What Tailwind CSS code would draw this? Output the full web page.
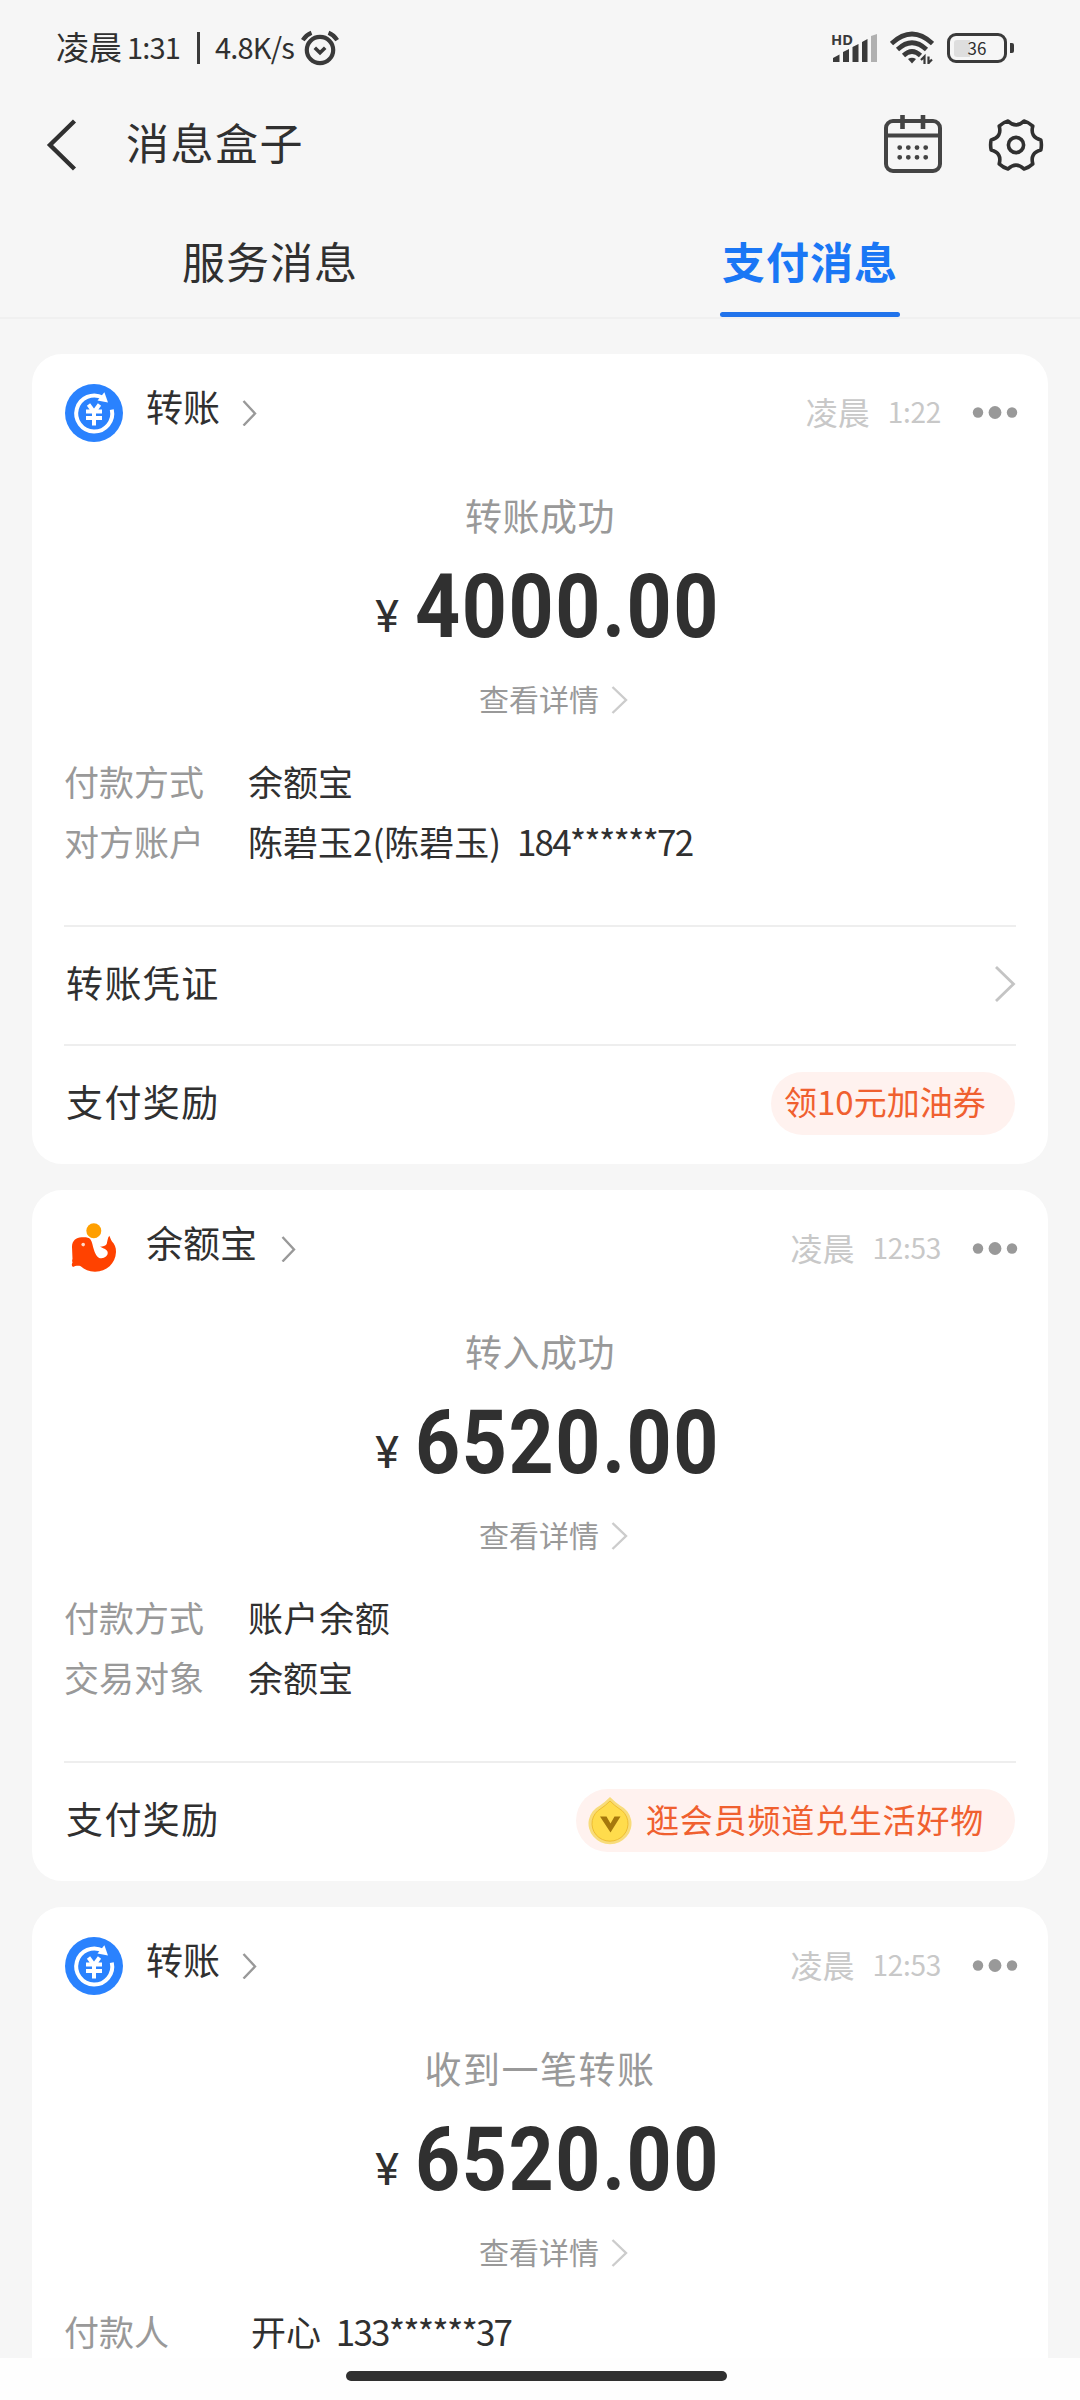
<!DOCTYPE html>
<html lang="zh-CN">
<head>
<meta charset="utf-8">
<title>消息盒子</title>
<script src="https://cdn.jsdelivr.net/npm/@tailwindcss/browser@4"></script>
</head>
<body class="bg-[#f6f6f6]">
<svg class="hidden">
  <symbol id="transfer" viewBox="0 0 58 58">
    <circle cx="29" cy="29" r="29" fill="#2a82fe"/>
    <path d="M38 13.8A18 18 0 1 0 46.8 25.6" fill="none" stroke="#fff" stroke-width="4"/>
    <path d="M39.4 8.2L43 18.6L32.5 16.5Z" fill="#fff"/>
    <path d="M23.5 20.5L29 28L34.5 20.5M21 27.5H37M21 34H37M29 27V41.5" fill="none" stroke="#fff" stroke-width="4"/>
  </symbol>
  <symbol id="more" viewBox="0 0 46 16">
    <g fill="#999"><circle cx="6" cy="7.500" r="5.2"/><circle cx="23" cy="7.500" r="6.4"/><circle cx="40" cy="7.500" r="5.2"/></g>
  </symbol>
</svg>

<div class="flex h-[2400px] w-[1080px] flex-col overflow-hidden bg-[#f6f6f6] font-['Noto_Sans_CJK_SC',sans-serif] font-normal leading-none text-[#303030]">

  <!-- status bar -->
  <div class="flex h-[96px] shrink-0 items-center justify-between pl-[56px] pr-[66px]">
    <div class="flex items-center">
      <span class="w-[71px] pb-[3px] text-[33px]">凌晨</span>
      <span class="w-[70px] pb-[3px] text-[29px] tracking-[-0.8px]">1:31</span>
      <span class="mr-[15px] h-[32px] w-[3px] bg-[#3a3a3a]"></span>
      <span class="w-[86px] pb-[3px] text-[29px] tracking-[-0.8px]">4.8K/s</span>
      <svg class="h-[36px] w-[38px]" viewBox="0 0 38 36" fill="none" stroke="#3a3a3a">
        <circle cx="19" cy="20" r="13.2" stroke-width="4.2"/>
        <path d="M13.8 17.8L19 22.8L24.2 17.8" stroke-width="3.6"/>
        <path d="M1.8 10.2Q5 5 10.5 2.8M36.2 10.2Q33 5 27.5 2.8" stroke-width="4.2"/>
      </svg>
    </div>
    <div class="flex items-center">
      <svg class="mr-[10px] h-[36px] w-[52px]" viewBox="0 0 52 36" fill="#3a3a3a">
        <text x="3" y="14.500" font-size="15" font-weight="700" font-family="Noto Sans" textLength="22" lengthAdjust="spacingAndGlyphs">HD</text>
        <path d="M5 32V28L11.500 24.500V32ZM15 32V22L21 19V32ZM24.500 32V17L30.500 14V32ZM34 32V12L39.500 9V32Z"/>
        <path d="M43 32V6L49 4V32Z" fill="#b0b0b0"/>
      </svg>
      <svg class="mr-[13px] h-[34px] w-[44px]" viewBox="0 0 44 34" fill="none" stroke="#3a3a3a" stroke-width="4.600">
        <path d="M1.500 12.500Q22 -6.500 42.500 12.500M7.500 18.500Q22 5 36.500 18.500M13.500 24.500Q22 16.500 30.500 24.500"/>
        <path d="M18 28Q22 25.500 26 28L22 32.500Z" fill="#3a3a3a" stroke="none"/>
        <path d="M31 29L34.500 25.500V33M38.500 33V25.500M38.500 32L42 28.500" stroke-width="2.200"/>
      </svg>
      <div class="relative flex h-[30px] w-[60px] items-center justify-center rounded-[9px] border-[3px] border-[#3a3a3a]">
        <span class="absolute left-[4px] top-[4px] h-[17px] w-[16px] rounded-l-[3px] bg-[#dedede]"></span>
        <span class="relative pb-px text-[17px]">36</span>
      </div>
      <span class="ml-[3px] h-[10px] w-[4px] rounded-r-[2px] bg-[#3a3a3a]"></span>
    </div>
  </div>

  <!-- title bar -->
  <div class="flex h-[98px] shrink-0 items-center pl-[46px] pr-[36px]">
    <svg class="h-[52px] w-[32px]" viewBox="0 0 32 52"><path d="M28.500 2L4 26L28.500 50" fill="none" stroke="#303030" stroke-width="4.400"/></svg>
    <h1 class="ml-[48px] pb-[8px] text-[43px] tracking-[1.5px]">消息盒子</h1>
    <svg class="ml-auto h-[60px] w-[60px]" viewBox="0 0 60 60" fill="none" stroke="#444" stroke-width="4">
      <rect x="3" y="6" width="54" height="50" rx="7"/>
      <path d="M3 20.500H57"/><path d="M19.500 0V14M40 0V14" stroke-width="4.600"/>
      <path d="M16.700 32.600h.01M25.300 32.600h.01M34 32.600h.01M42.700 32.600h.01M16.700 42.300h.01M25.300 42.300h.01M34 42.300h.01M42.700 42.300h.01" stroke-width="4.800" stroke-linecap="round"/>
    </svg>
    <svg class="ml-[45px] h-[56px] w-[56px]" viewBox="-28 -28 56 56" fill="none" stroke="#303030" stroke-width="3.600">
      <path stroke-linejoin="round" d="M-8 -24Q0 -16 8 -24Q13 -22.500 16.800 -18.900Q13.800 -8 24.800 -5.100Q26 0 24.800 5.100Q13.800 8 16.800 18.900Q13 22.500 8 24Q0 16 -8 24Q-13 22.500 -16.800 18.900Q-13.800 8 -24.800 5.100Q-26 0 -24.800 -5.100Q-13.800 -8 -16.800 -18.900Q-13 -22.500 -8 -24Z"/>
      <circle r="7.600"/>
    </svg>
  </div>

  <!-- tabs -->
  <div class="grid h-[125px] shrink-0 grid-cols-2 border-b-2 border-[#f0f0f0] text-[43px] tracking-[1px]">
    <div class="flex justify-center pt-[45px]">服务消息</div>
    <div class="relative flex justify-center pt-[45px] font-bold text-[#1a77f5]">支付消息
      <span class="absolute bottom-0 left-[180px] h-[5px] w-[180px] rounded-full bg-[#2173eb]"></span>
    </div>
  </div>

  <!-- message list -->
  <main class="flex h-[2039px] flex-col gap-[26px] overflow-hidden px-[32px] pt-[35px]">

    <section class="h-[810px] shrink-0 rounded-[30px] bg-white px-[32px]">
      <div class="flex h-[118px] items-center">
        <svg class="ml-px size-[58px]"><use href="#transfer"/></svg>
        <h2 class="ml-[23px] pb-[14px] text-[37px]">转账</h2>
        <svg class="ml-[22px] h-[26px] w-[15px]" viewBox="0 0 15 26"><path d="M1.500 1L13 13.500L1.500 25.500" fill="none" stroke="#999" stroke-width="2.400"/></svg>
        <span class="ml-auto pb-[5px] text-[32px] text-[#c8c8c8]">凌晨</span>
        <span class="ml-[18px] pb-[5px] text-[28px] tracking-[-0.3px] text-[#c8c8c8]">1:22</span>
        <svg class="ml-[31px] mr-[-2px] h-[16px] w-[46px]"><use href="#more"/></svg>
      </div>
      <div class="flex h-[90px] items-center justify-center pb-[4px] text-[37px] tracking-[0.5px] text-[#999]">转账成功</div>
      <div class="flex h-[88px] items-center pl-[301px]">
        <span class="mt-[20px] w-[44px] text-center font-[Roboto] text-[45px] font-normal">¥</span>
        <span class="ml-[6px] origin-left scale-x-[0.885] whitespace-nowrap font-[Roboto] text-[89px] font-bold tracking-[1.8px]">4000.00</span>
      </div>
      <div class="flex h-[100px] items-center pl-[415px] text-[30px] text-[#999]"><span class="pb-[4px]">查看详情</span>
        <svg class="ml-[12px] h-[28px] w-[18px]" viewBox="0 0 18 28"><path d="M1.500 1L15 14L1.500 27" fill="none" stroke="#ccc" stroke-width="2.400"/></svg>
      </div>
      <dl class="grid h-[175px] grid-cols-[184px_1fr] grid-rows-[60px_60px] items-center text-[35px]">
        <dt class="text-[#999]">付款方式</dt><dd>余额宝</dd>
        <dt class="text-[#999]">对方账户</dt><dd>陈碧玉2(陈碧玉) <span class="ml-[8px] tracking-[-1.8px]">184******72</span></dd>
      </dl>
      <div class="flex h-[119px] items-center justify-between border-t-2 border-[#eee] pb-[3px] text-[37px]"><span class="pb-[3px] pl-[2px] tracking-[1.4px]">转账凭证</span>
        <svg class="h-[36px] w-[22px]" viewBox="0 0 22 36"><path d="M2 1L19.500 18L2 35" fill="none" stroke="#c4c4c4" stroke-width="2.800"/></svg>
      </div>
      <div class="flex h-[119px] items-center justify-between border-t-2 border-[#eee] pb-[2px] text-[37px]"><span class="pb-[4px] pl-[2px] tracking-[1.4px]">支付奖励</span>
        <span class="mr-px flex h-[63px] w-[244px] items-center rounded-full bg-[#fff2ef] pb-[4px] pl-[13px] text-[33px] text-[#f0602f]">领10元加油券</span>
      </div>
    </section>

    <section class="h-[691px] shrink-0 rounded-[30px] bg-white px-[32px]">
      <div class="flex h-[118px] items-center">
        <svg class="ml-px size-[58px]" viewBox="0 0 58 58">
          <circle cx="28.800" cy="10.800" r="7.500" fill="#ff9f00"/>
          <path d="M7 27C7 20 12 16.500 18.300 17.300C21 17.200 24 17.500 25.500 19.500C27.500 22 27.500 26 29 30C30.500 35 33 38.500 36.500 38.300C40 38 43 35.500 42.700 32.500C42.300 29 38.500 28.500 35 26.700C38 26.500 40.500 26 41.700 24C42.500 21 42.500 18 44.300 15.700C45.500 18 46 20 47 21.500C49.500 24 51.200 27.500 51 32C50.500 43.500 41.500 51.700 30 51.700C24 51.500 19.500 49.500 15.700 46.200C13 45.500 10 46 8 47C6.500 46 6.500 44 7.500 42.500C7 41 7 40 7.500 39Z" fill="#ff4200"/>
          <circle cx="18.200" cy="24.600" r="1.800" fill="#ffd9c8"/>
        </svg>
        <h2 class="ml-[23px] pb-[14px] text-[37px]">余额宝</h2>
        <svg class="ml-[24px] h-[26px] w-[15px]" viewBox="0 0 15 26"><path d="M1.500 1L13 13.500L1.500 25.500" fill="none" stroke="#999" stroke-width="2.400"/></svg>
        <span class="ml-auto pb-[5px] text-[32px] text-[#c8c8c8]">凌晨</span>
        <span class="ml-[18px] pb-[5px] text-[28px] tracking-[-0.3px] text-[#c8c8c8]">12:53</span>
        <svg class="ml-[31px] mr-[-2px] h-[16px] w-[46px]"><use href="#more"/></svg>
      </div>
      <div class="flex h-[90px] items-center justify-center pb-[4px] text-[37px] tracking-[0.5px] text-[#999]">转入成功</div>
      <div class="flex h-[88px] items-center pl-[301px]">
        <span class="mt-[20px] w-[44px] text-center font-[Roboto] text-[45px] font-normal">¥</span>
        <span class="ml-[6px] origin-left scale-x-[0.885] whitespace-nowrap font-[Roboto] text-[89px] font-bold tracking-[1.8px]">6520.00</span>
      </div>
      <div class="flex h-[100px] items-center pl-[415px] text-[30px] text-[#999]"><span class="pb-[4px]">查看详情</span>
        <svg class="ml-[12px] h-[28px] w-[18px]" viewBox="0 0 18 28"><path d="M1.500 1L15 14L1.500 27" fill="none" stroke="#ccc" stroke-width="2.400"/></svg>
      </div>
      <dl class="grid h-[175px] grid-cols-[184px_1fr] grid-rows-[60px_60px] items-center text-[35px]">
        <dt class="text-[#999]">付款方式</dt><dd class="tracking-[0.6px]">账户余额</dd>
        <dt class="text-[#999]">交易对象</dt><dd>余额宝</dd>
      </dl>
      <div class="flex h-[119px] items-center justify-between border-t-2 border-[#eee] pb-[2px] text-[37px]"><span class="pb-[4px] pl-[2px] tracking-[1.4px]">支付奖励</span>
        <span class="mr-px flex h-[63px] w-[439px] items-center rounded-full bg-[#fff2ef] pl-[12px] text-[33px] tracking-[0.8px] text-[#f0602f]">
          <svg class="mr-[14px] h-[48px] w-[44px]" viewBox="0 0 44 48">
            <path d="M22 0Q27 5 32 8.500A21.500 20.500 0 1 1 12 8.500Q17 5 22 0Z" fill="#f8dc7a"/>
            <path d="M22 4Q27 9 31 11.500A18 17.500 0 1 1 13 11.500Q17 9 22 4Z" fill="#ffdc4c" stroke="#eebd33" stroke-width="1"/>
            <path d="M12 19.500H18.500L22.500 26.500L26.500 19.500H32.500L22.500 35.500Z" fill="#a5780c"/>
          </svg><span class="pb-[3px]">逛会员频道兑生活好物</span></span>
      </div>
    </section>

    <section class="h-[451px] shrink-0 rounded-t-[30px] bg-white px-[32px]">
      <div class="flex h-[118px] items-center">
        <svg class="ml-px size-[58px]"><use href="#transfer"/></svg>
        <h2 class="ml-[23px] pb-[14px] text-[37px]">转账</h2>
        <svg class="ml-[22px] h-[26px] w-[15px]" viewBox="0 0 15 26"><path d="M1.500 1L13 13.500L1.500 25.500" fill="none" stroke="#999" stroke-width="2.400"/></svg>
        <span class="ml-auto pb-[5px] text-[32px] text-[#c8c8c8]">凌晨</span>
        <span class="ml-[18px] pb-[5px] text-[28px] tracking-[-0.3px] text-[#c8c8c8]">12:53</span>
        <svg class="ml-[31px] mr-[-2px] h-[16px] w-[46px]"><use href="#more"/></svg>
      </div>
      <div class="flex h-[90px] items-center justify-center pb-[4px] text-[37px] tracking-[1.5px] text-[#999]">收到一笔转账</div>
      <div class="flex h-[88px] items-center pl-[301px]">
        <span class="mt-[20px] w-[44px] text-center font-[Roboto] text-[45px] font-normal">¥</span>
        <span class="ml-[6px] origin-left scale-x-[0.885] whitespace-nowrap font-[Roboto] text-[89px] font-bold tracking-[1.8px]">6520.00</span>
      </div>
      <div class="flex h-[100px] items-center pl-[415px] text-[30px] text-[#999]"><span class="pb-[4px]">查看详情</span>
        <svg class="ml-[12px] h-[28px] w-[18px]" viewBox="0 0 18 28"><path d="M1.500 1L15 14L1.500 27" fill="none" stroke="#ccc" stroke-width="2.400"/></svg>
      </div>
      <dl class="grid grid-cols-[184px_1fr] grid-rows-[55px] items-center text-[35px]">
        <dt class="text-[#999]">付款人</dt><dd class="pl-[3px]">开心 <span class="ml-[7px] tracking-[-1.8px]">133******37</span></dd>
      </dl>
    </section>
  </main>

  <!-- gesture bar -->
  <div class="flex h-[42px] shrink-0 bg-[#fefefe] pl-[346px] pt-[13px]">
    <span class="h-[10px] w-[381px] rounded-full bg-[#303030]"></span>
  </div>
</div>
</body>
</html>
